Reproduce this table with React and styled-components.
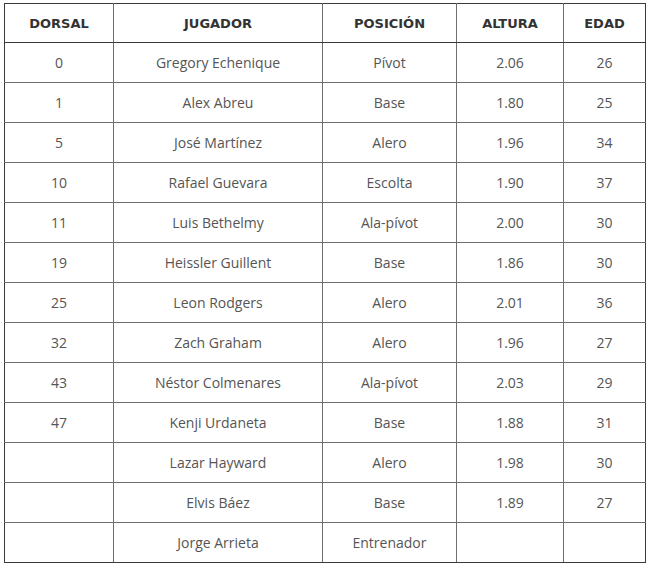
import React from "react"
import styled, { createGlobalStyle } from "styled-components"

const GlobalStyle = createGlobalStyle`
    body {
        margin: 0;
        background: #fff;
        font-family: "Open Sans", "Liberation Sans", sans-serif;
    }
`

const Wrapper = styled.div`
    padding: 3px 0 0 4px;
`

const Table = styled.table`
    width: 642px;
    table-layout: fixed;
    border-collapse: collapse;
    tr:first-child > * { border-top-color: #3a3a3a; }
    tr:last-child > * { border-bottom-color: #3a3a3a; }
    tr > *:first-child { border-left-color: #3a3a3a; }
    tr > *:last-child { border-right-color: #3a3a3a; }
`

const HeadRow = styled.tr`
    height: 39px;
`

const Row = styled.tr`
    height: 40px;
`

const Th = styled.th`
    border: 1px solid #6e6e6e;
    padding: 0;
    text-align: center;
    font-family: "DejaVu Sans", "Open Sans", sans-serif;
    font-weight: bold;
    font-size: 13px;
    color: #333;
`

const Td = styled.td`
    border: 1px solid #6e6e6e;
    padding: 0;
    text-align: center;
    font-size: 14px;
    color: #555;
`

const columns = [
    { label: "DORSAL", width: 109 },
    { label: "JUGADOR", width: 209 },
    { label: "POSICIÓN", width: 134 },
    { label: "ALTURA", width: 107 },
    { label: "EDAD", width: 82 },
]

const players = [
    ["0", "Gregory Echenique", "Pívot", "2.06", "26"],
    ["1", "Alex Abreu", "Base", "1.80", "25"],
    ["5", "José Martínez", "Alero", "1.96", "34"],
    ["10", "Rafael Guevara", "Escolta", "1.90", "37"],
    ["11", "Luis Bethelmy", "Ala-pívot", "2.00", "30"],
    ["19", "Heissler Guillent", "Base", "1.86", "30"],
    ["25", "Leon Rodgers", "Alero", "2.01", "36"],
    ["32", "Zach Graham", "Alero", "1.96", "27"],
    ["43", "Néstor Colmenares", "Ala-pívot", "2.03", "29"],
    ["47", "Kenji Urdaneta", "Base", "1.88", "31"],
    ["", "Lazar Hayward", "Alero", "1.98", "30"],
    ["", "Elvis Báez", "Base", "1.89", "27"],
    ["", "Jorge Arrieta", "Entrenador", "", ""],
]

const App = () => {
    return (
        <Wrapper>
            <GlobalStyle />
            <Table>
                <colgroup>
                    {columns.map(col => <col key={col.label} style={{ width: col.width }} />)}
                </colgroup>
                <thead>
                    <HeadRow>
                        {columns.map(col => <Th key={col.label}>{col.label}</Th>)}
                    </HeadRow>
                </thead>
                <tbody>
                    {players.map(player =>
                        <Row key={player[1]}>
                            {player.map((value, i) => <Td key={i}>{value}</Td>)}
                        </Row>
                    )}
                </tbody>
            </Table>
        </Wrapper>
    )
}

export default App
